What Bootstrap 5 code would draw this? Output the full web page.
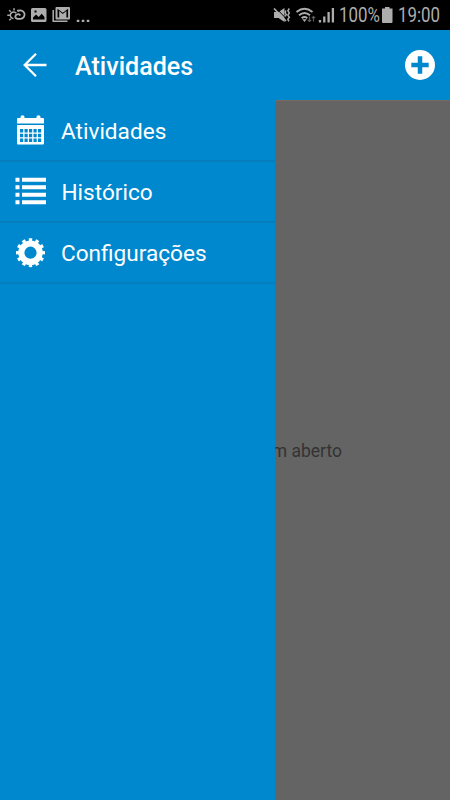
<!DOCTYPE html>
<html lang="pt-BR">
<head>
<meta charset="utf-8">
<meta name="viewport" content="width=device-width, initial-scale=1">
<title>Atividades</title>
<link href="https://cdn.jsdelivr.net/npm/bootstrap@5.3.0/dist/css/bootstrap.min.css" rel="stylesheet">
<style>
  body { font-family: Roboto, "Liberation Sans", sans-serif; background: #000; height: 800px; overflow: hidden; }
  svg { display: block; flex: none; }
  .status-strip { height: 30px; background: #000; color: #adadad; }
  .status-text { font-size: 19.5px; line-height: 30px; height: 30px; white-space: nowrap; padding-top: 1px; }
  .status-text span { display: inline-block; transform: scaleX(.865); transform-origin: 0 50%; }
  .pct, .clock { width: 42px; margin-left: 4px; }
  .edge-gap { width: 10px; }
  .app-header { height: 70px; background: #0088ce; padding: 0 15px 0 22px; }
  .app-title { font-size: 25.1px; font-weight: 500; line-height: 30px; margin-left: 27px; padding-top: 4px; }
  .drawer { width: 275px; background: #0088ce; position: relative; z-index: 1; }
  .drawer .list-group { padding-top: .4px; }
  .drawer .list-group-item { height: 61.3px; padding: 0 15px; background: transparent; color: #fff; font-size: 22.6px; border: 0; border-bottom: 2px solid #067dbd; }
  .drawer .list-group-item:last-child { border-bottom-width: 2px; }
  .drawer .list-group-item span { margin-left: 16px; line-height: 30px; padding-top: 3px; }
  .drawer .list-group-item .wide-icon { margin-right: -.5px; }
  .scrim { background: #646464; border-top: 1px solid #766b5d; color: #333; }
  .empty-note { width: 67px; margin-top: 338px; font-size: 17.5px; line-height: 24px; white-space: nowrap; }
</style>
<script src="https://cdn.jsdelivr.net/npm/bootstrap@5.3.0/dist/js/bootstrap.bundle.min.js"></script>
</head>
<body class="d-flex flex-column">
  <div class="status-strip d-flex align-items-center justify-content-between">
    <div class="d-flex align-items-center">
      <svg width="90" height="30" viewBox="0 0 90 30" fill="none" stroke="#adadad" stroke-width="1.500">
        <path d="M13.500 18.500a3.300 3.300 0 1 1 2.800-5.200M7.300 15.300h2.200M9.200 10.300l1.500 1.500M14 8.300v2.200M9.300 20.300l1.600-1.500M18.600 9.900l-1.300 1.200"/>
        <path stroke-width="1.800" d="M20.300 15.500c-1.200-2.300-5-1.300-5 1.100 0 1.400 1.200 2.200 2.600 2.200h2.300a4.200 4.200 0 1 0-2.500-7.400"/>
        <path fill="#adadad" stroke="none" fill-rule="evenodd" d="M32.500 8H45q1.500 0 1.500 1.500v11Q46.500 22 45 22H32.500Q31 22 31 20.500v-11Q31 8 32.500 8ZM33 19.500h11.500v-2.500l-2.800-3.200-3 3.200-2.700-2.500L33 17.500ZM34.500 10.500v2h2v-2Z"/>
        <path d="M53.200 10v11.200H67.500"/>
        <path fill="#adadad" stroke="none" fill-rule="evenodd" d="M56.500 7H69q1 0 1 1v10.500q0 1-1 1H56.500q-1 0-1-1V8q0-1 1-1ZM57.500 8.800V17.500h1.700V11l3.600 3 3.600-3v6.500h1.700V8.800l-5.300 4Z"/>
        <path fill="#adadad" stroke="none" d="M76.800 19.700h2.500V22h-2.500zM81.800 19.700h2.500V22h-2.500zM86.800 19.700h2.500V22h-2.500z"/>
      </svg>
    </div>
    <div class="d-flex align-items-center">
      <svg width="63" height="30" viewBox="272 0 63 30" fill="none" stroke="#adadad">
        <path fill="#adadad" stroke="none" d="M274 12h4.500l6-4v14l-6-4H274z"/>
        <path stroke="#000" stroke-width="1" d="M275.500 7.500l11.500 12"/>
        <path stroke-width="1.800" d="M274 8.500l12 12.500"/>
        <path stroke-width="1.500" d="M285.800 10.500l-.6 2 1 2-1 2M289.300 8.500l-1.400 2.200 1.400 2.200-1.400 2.200 1.400 2.200-1.400 2 1 2"/>
        <path stroke-width="1.900" d="M296.500 12q8-6.500 16 0M299 15.200q5.500-4.600 11 0M301.700 18.200q2.800-2.200 5.600 0"/>
        <path fill="#adadad" stroke="none" d="M302.300 19.300h4.400l-2.200 2.700z"/>
        <path stroke="#5c5c5c" stroke-width="1.200" d="M309.500 16.500v5m-1.700-1.700 1.700 1.700 1.700-1.700M313.500 21.500v-5m-1.700 1.700 1.700-1.700 1.700 1.700"/>
        <path stroke-width="2.300" d="M320 22.500v-2.500M324.300 22.500v-6M328.600 22.500V12M332.900 22.500V8"/>
      </svg>
      <div class="status-text pct"><span>100%</span></div>
      <svg width="13" height="30" viewBox="382 0 13 30" fill="#adadad"><path d="M386 7h4.500v1.500h3V22q0 1-1 1h-8.500q-1 0-1-1V8.500h3z"/></svg>
      <div class="status-text clock"><span>19:00</span></div>
      <div class="edge-gap"></div>
    </div>
  </div>

  <header class="app-header d-flex align-items-center text-white">
    <svg width="26" height="26" viewBox="22 52 26 26" fill="none" stroke="#fff" stroke-width="2.300"><path d="M46.500 65H24.500M36 53.700L24.700 65 36 76.300"/></svg>
    <h1 class="app-title mb-0">Atividades</h1>
    <svg class="ms-auto" width="30" height="30" viewBox="0 0 30 30"><circle cx="15" cy="15" r="15" fill="#fff"/><path d="M15 6.300v17.400M6.300 15h17.400" stroke="#0088ce" stroke-width="4.500"/></svg>
  </header>

  <main class="d-flex flex-grow-1">
    <nav class="drawer flex-shrink-0">
      <div class="list-group list-group-flush">
        <a class="list-group-item d-flex align-items-center" href="#">
          <svg width="30" height="30" viewBox="0 0 30 30"><path fill="#fff" d="M3 3h2.500V2q0-1.800 2-1.800t2 1.800v1H21.500V2q0-1.800 2-1.800t2 1.800v1H28q1 0 1 1v4.500H2V4q0-1 1-1zM2 10h27v18.500q0 1-1 1H3q-1 0-1-1z"/><g fill="#0088ce"><path id="week" d="M5 14h3.200v3.500H5zM9.500 14h3.200v3.500H9.500zM14 14h3.200v3.500H14zM18.500 14h3.200v3.500h-3.200zM23 14h3.200v3.500H23z"/><use href="#week" y="4.700"/><use href="#week" y="9.400"/></g></svg>
          <span>Atividades</span>
        </a>
        <a class="list-group-item d-flex align-items-center" href="#">
          <svg class="wide-icon" width="31" height="30" viewBox="0 0 31 30" fill="#fff"><path d="M7 1.700h24v4H7zM7 9.200h24v4H7zM7 16.700h24v4H7zM7 24.200h24v4H7z"/><path d="M.5 1.700h4v4h-4zM.5 9.200h4v4h-4zM.5 16.700h4v4h-4zM.5 24.200h4v4h-4z"/></svg>
          <span>Histórico</span>
        </a>
        <a class="list-group-item d-flex align-items-center" href="#">
          <svg width="30" height="30" viewBox="0 0 30 30" fill="none" stroke="#fff"><circle cx="15.500" cy="14.700" r="9.200" stroke-width="6.200"/><circle cx="15.500" cy="14.700" r="12.900" stroke-width="3.200" pathLength="120" stroke-dasharray="5 5" stroke-dashoffset="2.500"/></svg>
          <span>Configurações</span>
        </a>
      </div>
    </nav>
    <section class="scrim flex-grow-1">
      <div class="empty-note d-flex justify-content-end">m aberto</div>
    </section>
  </main>
</body>
</html>
